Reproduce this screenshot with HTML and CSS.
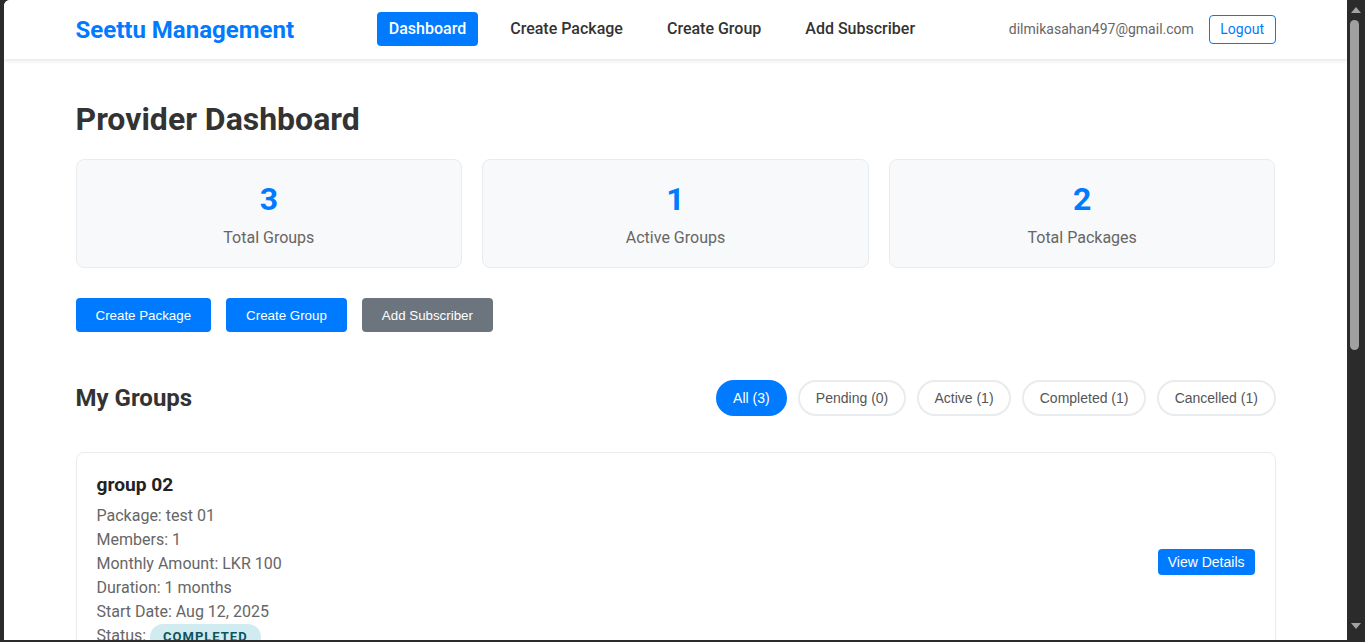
FILE: index.html
```html
<!DOCTYPE html>
<html lang="en">
<head>
<meta charset="utf-8">
<title>Seettu Management</title>
<link rel="stylesheet" href="styles.css">
</head>
<body>
<div class="frame">
  <div class="window">
    <header class="topbar">
      <div class="container topbar-inner">
        <div class="logo">Seettu Management</div>
        <nav class="nav">
          <a class="nav-link active">Dashboard</a>
          <a class="nav-link">Create Package</a>
          <a class="nav-link">Create Group</a>
          <a class="nav-link">Add Subscriber</a>
        </nav>
        <div class="user">
          <span class="email">dilmikasahan497@gmail.com</span>
          <button class="logout">Logout</button>
        </div>
      </div>
    </header>
    <main class="container main">
      <h1 class="page-title">Provider Dashboard</h1>
      <div class="stats">
        <div class="stat-card"><div class="stat-num">3</div><div class="stat-label">Total Groups</div></div>
        <div class="stat-card"><div class="stat-num">1</div><div class="stat-label">Active Groups</div></div>
        <div class="stat-card"><div class="stat-num">2</div><div class="stat-label">Total Packages</div></div>
      </div>
      <div class="actions">
        <button class="btn btn-primary">Create Package</button>
        <button class="btn btn-primary">Create Group</button>
        <button class="btn btn-secondary">Add Subscriber</button>
      </div>
      <div class="section-head">
        <h2 class="section-title">My Groups</h2>
        <div class="filters">
          <button class="pill active">All (3)</button>
          <button class="pill">Pending (0)</button>
          <button class="pill">Active (1)</button>
          <button class="pill">Completed (1)</button>
          <button class="pill">Cancelled (1)</button>
        </div>
      </div>
      <div class="group-card">
        <div class="group-info">
          <h3 class="group-title">group 02</h3>
          <p class="group-line">Package: test 01</p>
          <p class="group-line">Members: 1</p>
          <p class="group-line">Monthly Amount: LKR 100</p>
          <p class="group-line">Duration: 1 months</p>
          <p class="group-line">Start Date: Aug 12, 2025</p>
          <p class="group-line">Status: <span class="badge">COMPLETED</span></p>
        </div>
        <button class="btn-small">View Details</button>
      </div>
    </main>
  </div>
  <div class="scrollbar">
    <div class="arrow-up"></div>
    <div class="thumb-track"><div class="thumb"></div></div>
    <div class="arrow-down"></div>
  </div>
</div>
</body>
</html>
```
FILE: styles.css
```css
* { box-sizing: border-box; }
html, body { margin: 0; padding: 0; }
body {
  background: #2b2b2b;
  width: 1365px;
  height: 642px;
  overflow: hidden;
  font-family: Roboto, "Liberation Sans", Arial, sans-serif;
  color: #333;
}
.frame {
  display: flex;
  height: 642px;
  padding: 0 0 2px 4px;
}
.window {
  flex: 1;
  height: 640px;
  background: #fff;
  overflow: hidden;
  border-top-left-radius: 6px;
}
.container {
  max-width: 1200px;
  margin: 0 auto;
}
.topbar {
  background: #fff;
  box-shadow: 0 2px 4px rgba(0,0,0,0.1);
  padding: 12px 0 13px;
  position: relative;
}
.topbar-inner {
  display: flex;
  justify-content: space-between;
  align-items: center;
  height: 34px;
}
.logo {
  color: #007bff;
  font-weight: 700;
  font-size: 24px;
  padding-top: 1px;
}
.nav {
  display: flex;
  gap: 20px;
  padding-left: 1px;
}
.nav-link {
  font-size: 16px;
  font-weight: 500;
  color: #333;
  padding: 8px 12px;
  line-height: 18px;
  border-radius: 4px;
}
.nav-link.active {
  background: #007bff;
  color: #fff;
}
.user {
  display: flex;
  align-items: center;
  gap: 15px;
}
.email {
  font-size: 14px;
  color: #666;
}
.logout {
  font-family: Roboto, sans-serif;
  font-size: 14px;
  color: #007bff;
  background: #fff;
  border: 1px solid #007bff;
  border-radius: 4px;
  padding: 5px 10.5px;
  line-height: 17px;
}
.main {
  padding-top: 20px;
}
.page-title {
  font-size: 32px;
  font-weight: 700;
  margin: 21px 0;
  color: #333;
}
.stats {
  display: grid;
  grid-template-columns: repeat(3, 1fr);
  gap: 20px;
}
.stat-card {
  background: #f8f9fa;
  border: 1px solid #e9ecef;
  border-radius: 8px;
  padding: 20px;
  text-align: center;
}
.stat-num {
  font-size: 32px;
  font-weight: 700;
  color: #007bff;
  margin-bottom: 10px;
}
.stat-label {
  font-size: 16px;
  color: #666;
}
.actions {
  display: flex;
  gap: 15px;
  margin-top: 30px;
}
.btn {
  font-family: "Liberation Sans", Arial, sans-serif;
  font-size: 13.333px;
  line-height: 15px;
  color: #fff;
  border: none;
  border-radius: 4px;
  padding: 9.5px 20px;
}
.btn-primary { background: #007bff; }
.btn-secondary { background: #6c757d; }
.section-head {
  display: flex;
  justify-content: space-between;
  align-items: center;
  margin-top: 32px;
  margin-bottom: 20px;
}
.section-title {
  font-size: 24px;
  font-weight: 700;
  margin: 20px 0;
  color: #333;
}
.filters {
  display: flex;
  gap: 11px;
}
.pill {
  font-family: "Liberation Sans", Arial, sans-serif;
  font-size: 14px;
  line-height: 16px;
  color: #555;
  background: #fff;
  border: 2px solid #e9ecef;
  border-radius: 20px;
  padding: 8px 15.6px;
}
.pill.active {
  background: #007bff;
  border-color: #007bff;
  color: #fff;
}
.group-card {
  display: flex;
  justify-content: space-between;
  align-items: center;
  border: 1px solid #e9ecef;
  border-radius: 8px;
  padding: 20px;
  background: #fff;
}
.group-title {
  font-size: 19.2px;
  font-weight: 700;
  color: #222;
  margin: 0 0 8px;
}
.group-line {
  margin: 0;
  font-size: 16px;
  line-height: 24px;
  color: #666;
}
.badge {
  display: inline-block;
  background: #d1ecf1;
  color: #0c5460;
  font-size: 13px;
  font-weight: 700;
  letter-spacing: 1px;
  line-height: 18px;
  padding: 4px 13px;
  border-radius: 13px;
}
.btn-small {
  font-family: "Liberation Sans", Arial, sans-serif;
  font-size: 14px;
  line-height: 16px;
  color: #fff;
  background: #007bff;
  border: none;
  border-radius: 4px;
  padding: 5px 10px;
}
.scrollbar {
  width: 18px;
  height: 640px;
  display: flex;
  flex-direction: column;
  align-items: center;
  padding-top: 7px;
}
.arrow-up {
  width: 0;
  height: 0;
  border-left: 5px solid transparent;
  border-right: 5px solid transparent;
  border-bottom: 6px solid #a3a3a3;
}
.thumb-track {
  flex: 1;
  width: 100%;
  padding: 7px 0 0 3px;
}
.thumb {
  width: 9px;
  height: 330px;
  background: #a0a0a0;
  border-radius: 5px;
}
.arrow-down {
  width: 0;
  height: 0;
  border-left: 5px solid transparent;
  border-right: 5px solid transparent;
  border-top: 6px solid #a3a3a3;
  margin-bottom: 11px;
}
```
